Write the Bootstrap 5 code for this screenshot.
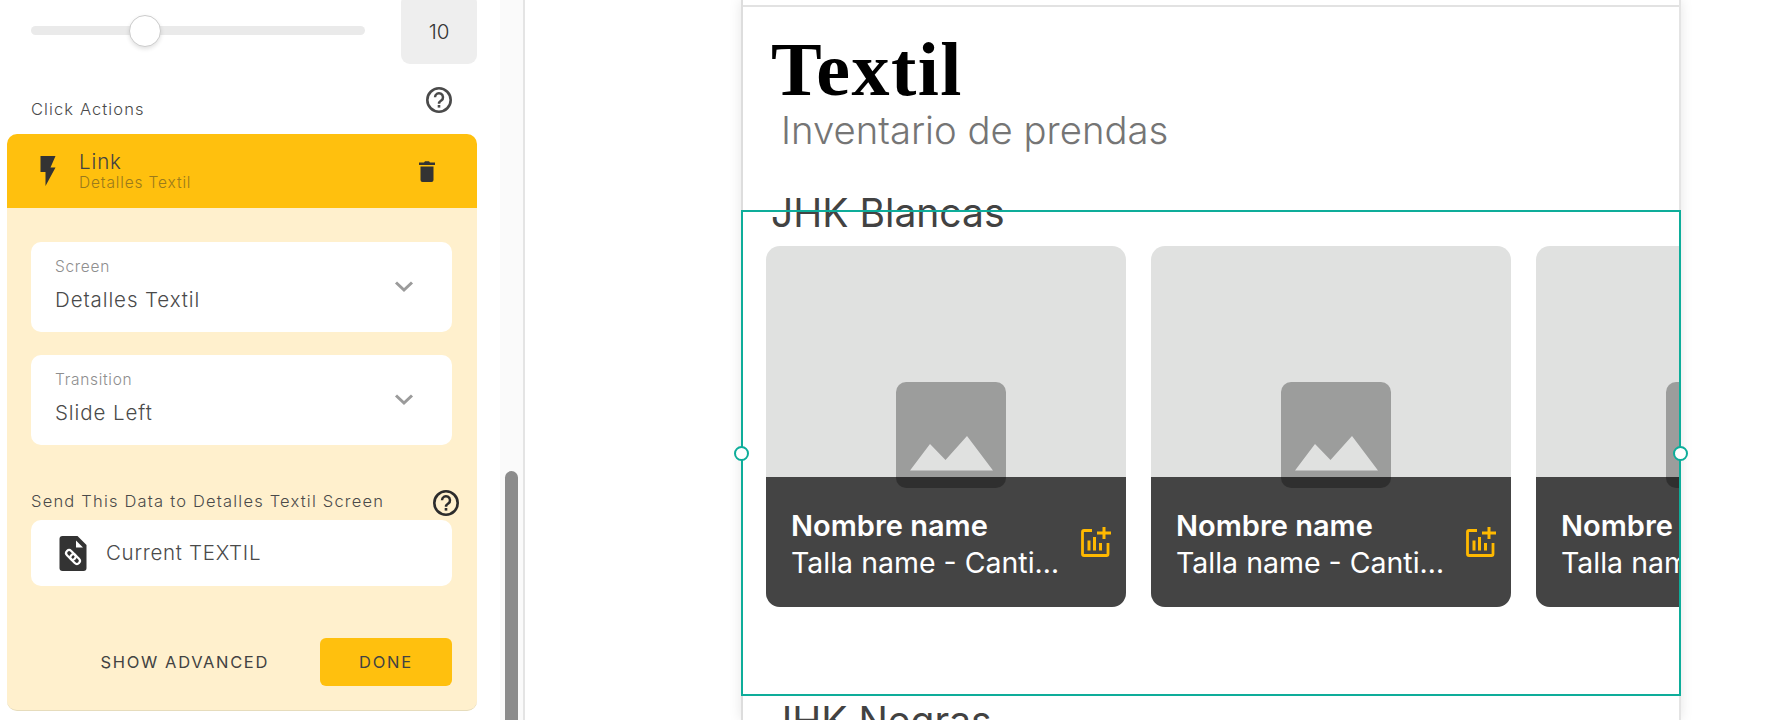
<!DOCTYPE html>
<html lang="en">
<head>
    <meta charset="UTF-8">
    <title>Textil</title>
    <link href="https://cdn.jsdelivr.net/npm/bootstrap@5.3.0/dist/css/bootstrap.min.css" rel="stylesheet">
    <style>
        html, body { height: 720px; overflow: hidden; background: #fff; }
        body { font-family: "Inter", "Liberation Sans", sans-serif; color: #424242; }
        .app-shell { width: 1767px; height: 720px; overflow: hidden; }

        /* left settings panel */
        .side-panel { width: 500px; height: 720px; flex: none; padding-left: 7px; padding-right: 23px; overflow: hidden; }
        .slider-row { height: 64px; padding-left: 24px; }
        .slider-track { width: 334px; height: 9px; background: #eaeaea; border-radius: 5px; margin-top: 26px; }
        .slider-thumb { position: absolute; left: 98px; top: -11px; width: 32px; height: 32px; border-radius: 50%; background: #fff; border: 1px solid #ccc; box-shadow: 0 2px 4px rgba(0,0,0,.12); }
        .value-box { width: 76px; height: 70px; margin-top: -6px; padding-top: 6px; background: #eee; border-radius: 9px; font-size: 20.5px; color: #333; font-weight: 300; }
        .actions-head { height: 70px; padding-left: 24px; padding-right: 24px; }
        .actions-label { font-size: 16.5px; letter-spacing: 1.1px; margin-bottom: 12px; color: #4a4a4a; font-weight: 300; }
        .actions-help { margin-bottom: 20px; }
        .action-head { height: 74px; background: #ffc00e; border-radius: 10px 10px 0 0; padding-left: 33px; padding-right: 42px; }
        .action-title { font-size: 20.5px; line-height: 22px; color: #424242; margin-left: 23px; font-weight: 300; letter-spacing: .9px; }
        .action-sub { font-size: 15.5px; line-height: 18px; margin-top: 1px; color: #9a7a1c; margin-left: 23px; letter-spacing: .85px; font-weight: 300; }
        .action-body { height: 503px; background: #fff0cd; border-radius: 0 0 10px 10px; border-bottom: 1px solid #e6dcbc; padding: 34px 25px 0 24px; }
        .select-box { height: 90px; background: #fff; border-radius: 10px; padding: 15px 38px 0 24px; margin-bottom: 23px; }
        .select-label { font-size: 15.5px; line-height: 20px; color: #8e8e8e; letter-spacing: .7px; font-weight: 300; }
        .select-value { font-size: 20.5px; line-height: 26px; margin-top: 10px; color: #4a4a4a; letter-spacing: .9px; font-weight: 300; }
        .select-chev { margin-top: 23px; }
        .send-row { height: 36px; margin-top: 41px; }
        .send-label { font-size: 16.5px; letter-spacing: 1.2px; color: #4a4a4a; margin-top: 3px; font-weight: 300; white-space: nowrap; }
        .send-help { margin-right: -8px; margin-top: 3px; }
        .data-box { height: 66px; background: #fff; border-radius: 10px; padding-left: 28px; margin-top: -2px; }
        .data-text { font-size: 20.5px; margin-left: 19px; color: #4a4a4a; letter-spacing: .7px; font-weight: 300; }
        .foot-row { margin-top: 52px; height: 48px; }
        .adv-link { font-size: 16.5px; letter-spacing: 1.65px; margin-right: 51px; color: #424242; }
        .done-btn { width: 132px; height: 48px; background: #ffc00e; border: 0; border-radius: 6px; font-size: 16.5px; letter-spacing: 1.8px; color: #424242; padding: 0; }

        /* scrollbar strip between panel and canvas */
        .side-scroll { width: 25px; height: 720px; flex: none; background: #fafafa; padding: 471px 0 0 5px; border-right: 2px solid #e4e4e4; }
        .side-thumb { width: 13px; height: 249px; background: #8c8c8c; border-radius: 7px 7px 0 0; }

        /* canvas */
        .canvas-area { flex: 1 1 auto; min-width: 0; padding-left: 216px; }
        .phone-frame { width: 940px; height: 720px; background: #fff; border-left: 2px solid #ddd; border-right: 2px solid #e4e4e4; box-shadow: 0 0 12px rgba(0,0,0,.1); overflow: hidden; }
        .frame-rule { height: 2px; background: #e2e2e2; margin-top: 5px; }
        .page-title { font-family: "Liberation Serif", serif; font-weight: 700; font-size: 76px; line-height: 84px; letter-spacing: 1.5px; color: #000; margin: 20px 0 0 28px; }
        .page-sub { font-size: 38.3px; line-height: 44px; font-weight: 300; color: #757575; margin: -3px 0 0 38px; }
        .section-title { font-size: 39px; line-height: 46px; color: #424242; margin: 38px 0 0 28px; font-weight: 400; }
        .card-strip { gap: 25px; margin: 10px 0 0 23px; }
        .tile { width: 360px; height: 361px; flex: none; border-radius: 14px; overflow: hidden; background: #e0e1e0; position: relative; }
        .tile-img { height: 231px; }
        .tile-bar { height: 130px; background: #444; color: #fff; padding: 30px 15px 0 25px; }
        .tile-name { font-size: 29px; line-height: 37px; font-weight: 600; white-space: nowrap; }
        .tile-line { font-size: 28.5px; line-height: 37px; width: 270px; white-space: nowrap; overflow: hidden; text-overflow: ellipsis; }
        .tile-icon { margin-top: 20px; flex: none; }
        .tile-ph { position: absolute; left: 130px; top: 136px; width: 110px; height: 106px; border-radius: 10px; background: rgba(0,0,0,.3); }
        .ph-mark { margin-bottom: 17px; }
        .section-next { font-size: 39px; line-height: 46px; color: #424242; margin: 91px 0 0 27px; }

        /* selection overlay */
        .select-rect { position: absolute; left: 741px; top: 210px; width: 940px; height: 486px; border: 2px solid #0ead9a; pointer-events: none; }
        .select-dot { position: absolute; top: 234px; width: 15px; height: 15px; border-radius: 50%; background: #fff; border: 2px solid #0ead9a; }
        .select-dot-l { left: -9px; }
        .select-dot-r { right: -9px; }
    </style>
</head>
<body>
    <div class="app-shell d-flex position-relative">
        <!-- Settings panel -->
        <div class="side-panel">
            <div class="slider-row d-flex justify-content-between">
                <div class="slider-track position-relative"><div class="slider-thumb"></div></div>
                <div class="value-box d-flex align-items-center justify-content-center">10</div>
            </div>
            <div class="actions-head d-flex justify-content-between align-items-end">
                <span class="actions-label">Click Actions</span>
                <svg class="actions-help" width="28" height="28" viewBox="0 0 28 28"><circle cx="14" cy="14" r="11.7" fill="none" stroke="#4a4a4a" stroke-width="2.6"/><path d="M10 11.2a4 4 0 1 1 6.3 3.3c-1.4 1-2.3 1.6-2.3 3.2" fill="none" stroke="#4a4a4a" stroke-width="2.5"/><rect x="12.7" y="19" width="2.6" height="2.6" fill="#4a4a4a"/></svg>
            </div>

            <div class="action-head d-flex align-items-center">
                <svg width="16" height="30" viewBox="0 0 16 30"><path d="M.5 0H15.500L10.500 11.500H15.500L5.500 30V16H.5Z" fill="#333"/></svg>
                <div class="flex-grow-1">
                    <div class="action-title">Link</div>
                    <div class="action-sub">Detalles Textil</div>
                </div>
                <svg width="16" height="21" viewBox="0 0 16 21"><path d="M5 1.500 6 .3h4l1 1.200h5V4H0V1.500ZM1.500 5.500h13V19a2 2 0 0 1-2 2h-9a2 2 0 0 1-2-2Z" fill="#333"/></svg>
            </div>

            <div class="action-body">
                <div class="select-box d-flex justify-content-between">
                    <div>
                        <div class="select-label">Screen</div>
                        <div class="select-value">Detalles Textil</div>
                    </div>
                    <svg class="select-chev" width="20" height="13" viewBox="0 0 20 13"><path d="M2 2.500 10 10 18 2.500" fill="none" stroke="#9b9b9b" stroke-width="3"/></svg>
                </div>
                <div class="select-box d-flex justify-content-between">
                    <div>
                        <div class="select-label">Transition</div>
                        <div class="select-value">Slide Left</div>
                    </div>
                    <svg class="select-chev" width="20" height="13" viewBox="0 0 20 13"><path d="M2 2.500 10 10 18 2.500" fill="none" stroke="#9b9b9b" stroke-width="3"/></svg>
                </div>

                <div class="send-row d-flex justify-content-between align-items-start">
                    <span class="send-label">Send This Data to Detalles Textil Screen</span>
                    <svg class="send-help" width="28" height="28" viewBox="0 0 28 28"><circle cx="14" cy="14" r="11.7" fill="none" stroke="#2c2c2c" stroke-width="2.6"/><path d="M10 11.2a4 4 0 1 1 6.3 3.3c-1.4 1-2.3 1.6-2.3 3.2" fill="none" stroke="#2c2c2c" stroke-width="2.5"/><rect x="12.7" y="19" width="2.6" height="2.6" fill="#2c2c2c"/></svg>
                </div>
                <div class="data-box d-flex align-items-center">
                    <svg width="28" height="35" viewBox="0 0 27 35"><path d="M3 0H18L27 9V32a3 3 0 0 1-3 3H3a3 3 0 0 1-3-3V3A3 3 0 0 1 3 0Z" fill="#333"/><path d="M16.500 4.500 23.500 11.500H16.500Z" fill="#fff"/><g fill="none" stroke="#fff" stroke-width="2.200" transform="rotate(45 13.500 21)"><rect x="5" y="18" width="11" height="6" rx="3"/><rect x="11" y="18" width="11" height="6" rx="3"/></g></svg>
                    <span class="data-text">Current TEXTIL</span>
                </div>
                <div class="foot-row d-flex justify-content-end align-items-center">
                    <span class="adv-link">SHOW ADVANCED</span>
                    <button class="done-btn" type="button">DONE</button>
                </div>
            </div>
        </div>

        <div class="side-scroll"><div class="side-thumb"></div></div>

        <!-- Canvas -->
        <div class="canvas-area">
            <div class="phone-frame">
                <div class="frame-rule"></div>
                <h1 class="page-title">Textil</h1>
                <div class="page-sub">Inventario de prendas</div>
                <div class="section-title">JHK Blancas</div>
                <div class="card-strip d-flex">
                    <div class="tile">
                        <div class="tile-img"></div>
                        <div class="tile-bar d-flex justify-content-between">
                            <div>
                                <div class="tile-name">Nombre name</div>
                                <div class="tile-line">Talla name - Cantidad</div>
                            </div>
                            <svg class="tile-icon" width="30" height="30" viewBox="0 0 30 30"><path d="M11 3.500H3A1.500 1.500 0 0 0 1.500 5V27A1.500 1.500 0 0 0 3 28.500H25.500A1.500 1.500 0 0 0 27 27V16" fill="none" stroke="#ffb900" stroke-width="2.800"/><path d="M21.500 0h3v4.500H30v3h-5.500V12h-3V7.500H16v-3h5.500Z" fill="#ffb900"/><rect x="6.500" y="13.500" width="3" height="10" fill="#ffb900"/><rect x="12" y="10" width="3" height="13.500" fill="#ffb900"/><rect x="18" y="16" width="3" height="7.500" fill="#ffb900"/></svg>
                        </div>
                        <div class="tile-ph d-flex align-items-end justify-content-center">
                            <svg class="ph-mark" width="83" height="35" viewBox="0 0 83 35"><path d="M0 34.500 20 8 35.500 24 57 0 83 34.500Z" fill="#e0e1e0"/></svg>
                        </div>
                    </div>
                    <div class="tile">
                        <div class="tile-img"></div>
                        <div class="tile-bar d-flex justify-content-between">
                            <div>
                                <div class="tile-name">Nombre name</div>
                                <div class="tile-line">Talla name - Cantidad</div>
                            </div>
                            <svg class="tile-icon" width="30" height="30" viewBox="0 0 30 30"><path d="M11 3.500H3A1.500 1.500 0 0 0 1.500 5V27A1.500 1.500 0 0 0 3 28.500H25.500A1.500 1.500 0 0 0 27 27V16" fill="none" stroke="#ffb900" stroke-width="2.800"/><path d="M21.500 0h3v4.500H30v3h-5.500V12h-3V7.500H16v-3h5.500Z" fill="#ffb900"/><rect x="6.500" y="13.500" width="3" height="10" fill="#ffb900"/><rect x="12" y="10" width="3" height="13.500" fill="#ffb900"/><rect x="18" y="16" width="3" height="7.500" fill="#ffb900"/></svg>
                        </div>
                        <div class="tile-ph d-flex align-items-end justify-content-center">
                            <svg class="ph-mark" width="83" height="35" viewBox="0 0 83 35"><path d="M0 34.500 20 8 35.500 24 57 0 83 34.500Z" fill="#e0e1e0"/></svg>
                        </div>
                    </div>
                    <div class="tile">
                        <div class="tile-img"></div>
                        <div class="tile-bar d-flex justify-content-between">
                            <div>
                                <div class="tile-name">Nombre name</div>
                                <div class="tile-line">Talla name - Cantidad</div>
                            </div>
                        </div>
                        <div class="tile-ph d-flex align-items-end justify-content-center"></div>
                    </div>
                </div>
                <div class="section-next">JHK Negras</div>
            </div>
        </div>

        <!-- Selected component outline -->
        <div class="select-rect">
            <div class="select-dot select-dot-l"></div>
            <div class="select-dot select-dot-r"></div>
        </div>
    </div>
    <script src="https://cdn.jsdelivr.net/npm/bootstrap@5.3.0/dist/js/bootstrap.bundle.min.js"></script>
</body>
</html>
